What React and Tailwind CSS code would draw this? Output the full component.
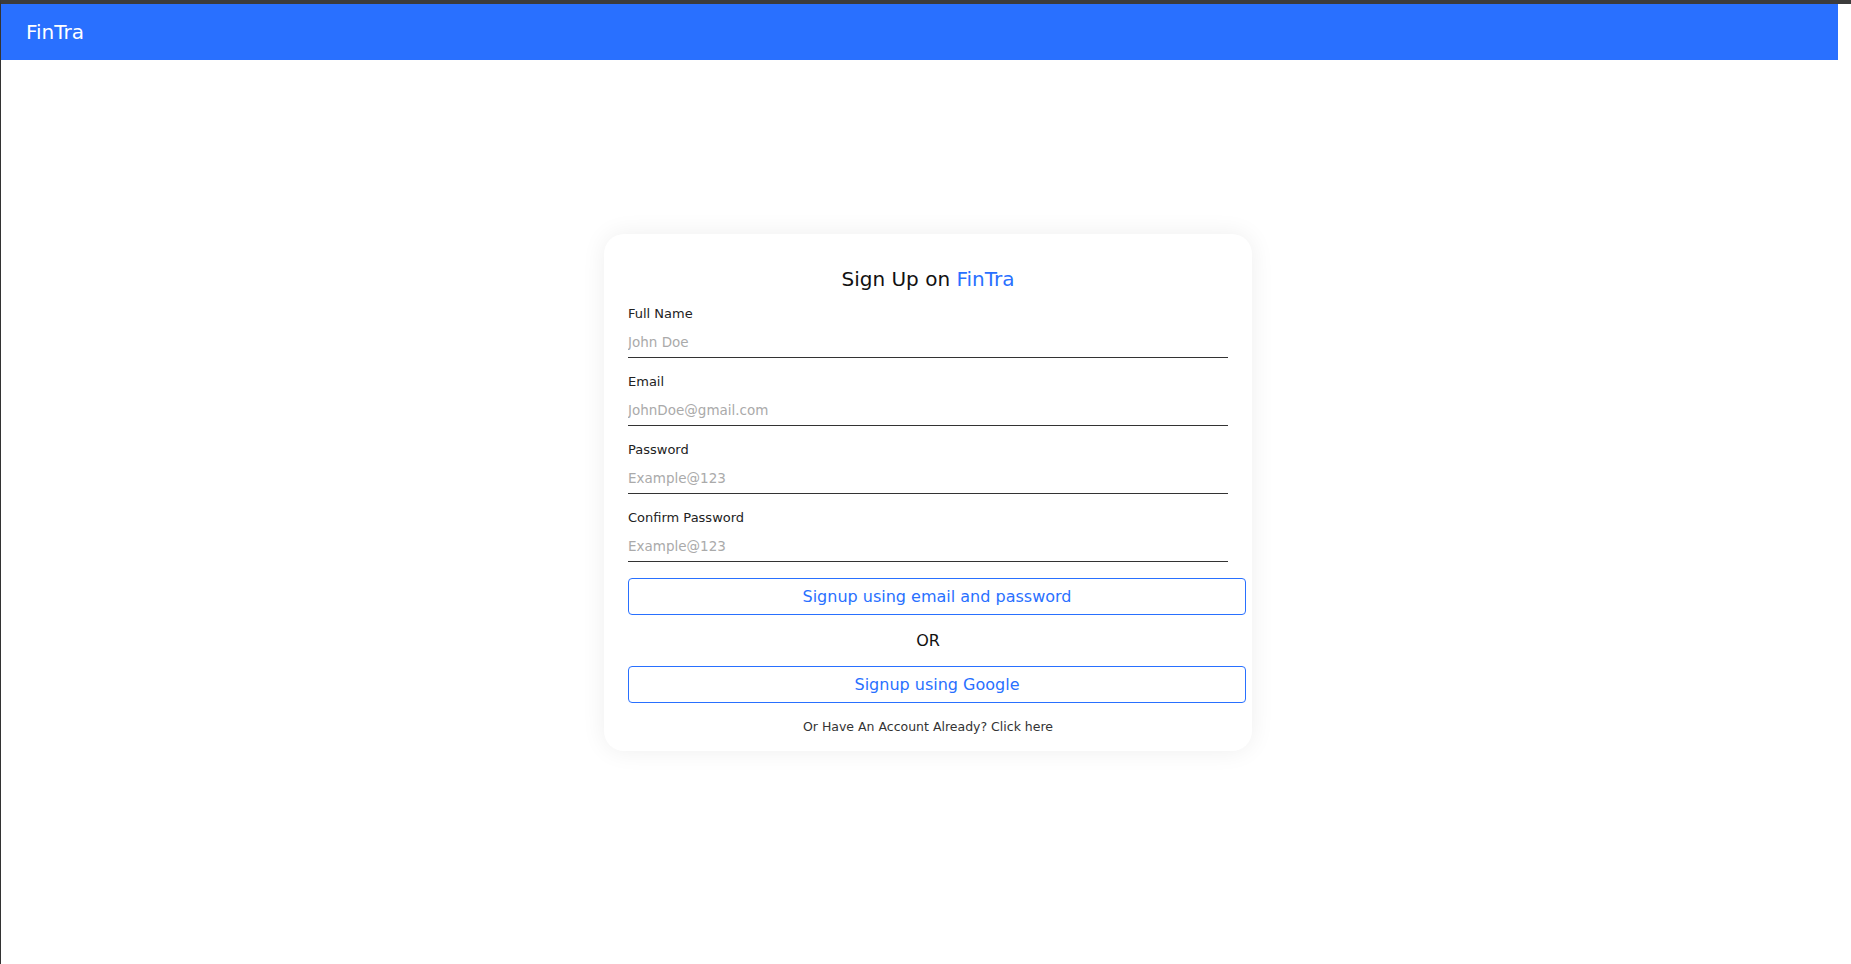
import { useState } from 'react'

const FONT = "font-['DejaVu_Sans',sans-serif]"

function Field({ label, placeholder, type = 'text', value, onChange }) {
  return (
    <div className="flex flex-col">
      <label className="pt-[1px] text-[13px] leading-[16px] text-[#222]">{label}</label>
      <input
        type={type}
        value={value}
        onChange={onChange}
        placeholder={placeholder}
        className="mt-[5px] h-[31px] w-[600px] border-b border-[#333] bg-transparent text-[13.5px] text-[#222] outline-none placeholder:text-[#aaa]"
      />
    </div>
  )
}

export default function App() {
  const [form, setForm] = useState({ name: '', email: '', password: '', confirm: '' })
  const set = (key) => (e) => setForm({ ...form, [key]: e.target.value })

  return (
    <div className={`min-h-screen border-l border-[#333] border-t-4 border-t-[#3c3c3c] bg-white ${FONT}`}>
      <header className="flex h-[56px] w-[1837px] items-center bg-[#2970ff] px-[25px]">
        <span className="text-[20px] text-white">FinTra</span>
      </header>

      <main className="flex justify-center pt-[174px]">
        <div className="ml-[4px] flex w-[648px] flex-col rounded-[20px] bg-white px-[24px] pb-[15px] pt-[33px] shadow-[0_0_24px_rgba(0,0,0,0.07)]">
          <h1 className="text-center text-[20px] leading-[24px] text-[#111]">
            Sign Up on <span className="text-[#2970ff]">FinTra</span>
          </h1>

          <div className="mt-[14px] flex flex-col gap-[15px]">
            <Field label="Full Name" placeholder="John Doe" value={form.name} onChange={set('name')} />
            <Field label="Email" placeholder="JohnDoe@gmail.com" type="email" value={form.email} onChange={set('email')} />
            <Field label="Password" placeholder="Example@123" type="password" value={form.password} onChange={set('password')} />
            <Field label="Confirm Password" placeholder="Example@123" type="password" value={form.confirm} onChange={set('confirm')} />
          </div>

          <button className="mt-[16px] h-[37px] w-[618px] rounded-[4px] border border-[#2970ff] bg-white text-[16px] text-[#2970ff]">
            Signup using email and password
          </button>
          <p className="mt-[16px] text-center text-[16px] leading-[20px] text-[#111]">OR</p>
          <button className="mt-[15px] h-[37px] w-[618px] rounded-[4px] border border-[#2970ff] bg-white text-[16px] text-[#2970ff]">
            Signup using Google
          </button>
          <p className="mt-[15px] text-center text-[12.5px] leading-[18px] text-[#333]">
            Or Have An Account Already? <span className="cursor-pointer">Click here</span>
          </p>
        </div>
      </main>
    </div>
  )
}
